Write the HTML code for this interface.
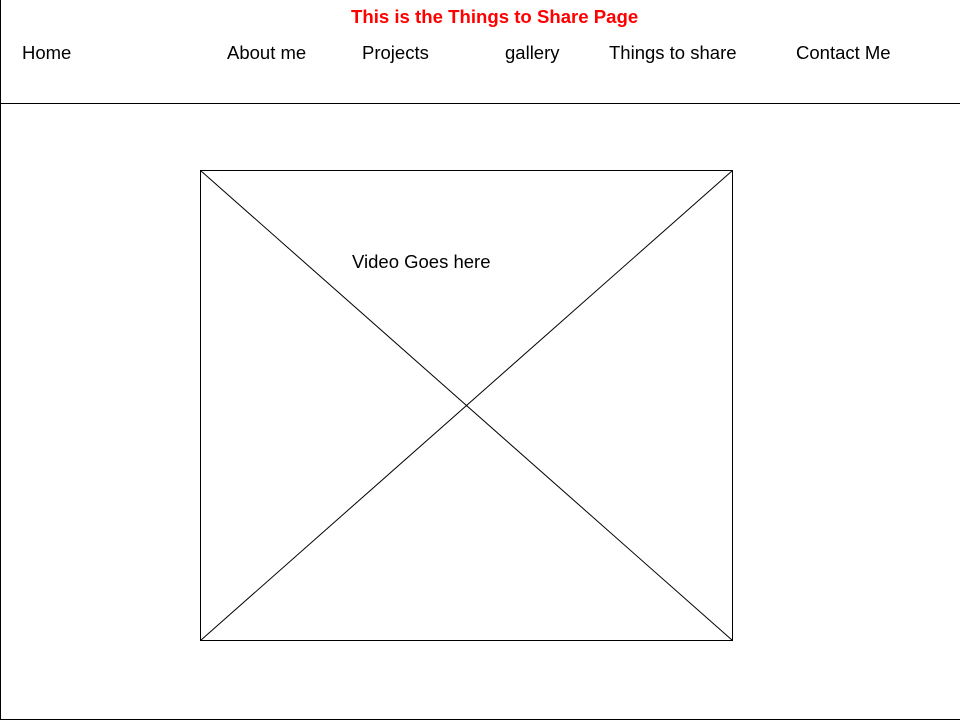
<!DOCTYPE html>
<html><head><style>
body{margin:0;width:960px;height:720px;position:relative;background:#fff;font-family:"Liberation Sans",sans-serif;overflow:hidden}
.t{position:absolute;white-space:nowrap;font-size:18.5px;color:#000;line-height:1}
</style></head><body>
<div style="position:absolute;left:0;top:0;width:1px;height:720px;background:#000"></div>
<div style="position:absolute;left:0;top:103px;width:960px;height:1px;background:#000"></div>
<div style="position:absolute;left:0;top:719px;width:960px;height:1px;background:#000"></div>
<div class="t" style="left:351px;top:8px;color:#f00;font-weight:bold;font-size:18.6px">This is the Things to Share Page</div>
<div class="t" style="left:22px;top:44px">Home</div>
<div class="t" style="left:227px;top:44px">About me</div>
<div class="t" style="left:362px;top:44px">Projects</div>
<div class="t" style="left:505px;top:44px">gallery</div>
<div class="t" style="left:609px;top:44px">Things to share</div>
<div class="t" style="left:796px;top:44px">Contact Me</div>
<svg style="position:absolute;left:0;top:0" width="960" height="720">
<rect x="200.5" y="170.5" width="532" height="470" fill="none" stroke="#000" stroke-width="1"/>
<line x1="200.5" y1="170.5" x2="732.5" y2="640.5" stroke="#000"/>
<line x1="732.5" y1="170.5" x2="200.5" y2="640.5" stroke="#000"/>
</svg>
<div class="t" style="left:352px;top:253px">Video Goes here</div>
</body></html>
